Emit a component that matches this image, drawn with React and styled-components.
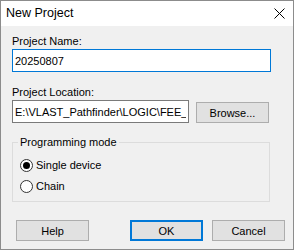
import styled, { createGlobalStyle } from 'styled-components';
import { useState } from 'react';

const GlobalStyle = createGlobalStyle`
  body {
    margin: 0;
    background: #ffffff;
    font-family: 'Liberation Sans', Arial, sans-serif;
  }
`;

function App() {
  const [mode, setMode] = useState('single');

  return (
    <>
      <GlobalStyle />
      <Dialog>
        <TitleBar>
          <Title>New Project</Title>
          <CloseIcon width="11" height="11" viewBox="0 0 11 11">
            <path d="M0.5 0.5 L10.5 10.5 M10.5 0.5 L0.5 10.5" stroke="#000" strokeWidth="1" />
          </CloseIcon>
        </TitleBar>
        <Body>
          <Content>
            <Label>Project Name:</Label>
            <TextBox $focused defaultValue="20250807" />
            <Label $gap>Project Location:</Label>
            <LocationRow>
              <TextBox $width={177} readOnly value={'E:\\VLAST_Pathfinder\\LOGIC\\FEE_LOGIC'} />
              <Button>Browse...</Button>
            </LocationRow>
            <Group>
              <Legend>Programming mode</Legend>
              <Radio onClick={() => setMode('single')}>
                <Circle>{mode === 'single' && <Dot />}</Circle>
                Single device
              </Radio>
              <Radio onClick={() => setMode('chain')}>
                <Circle>{mode === 'chain' && <Dot />}</Circle>
                Chain
              </Radio>
            </Group>
          </Content>
          <Footer>
            <Button>Help</Button>
            <ButtonGroup>
              <Button $primary>OK</Button>
              <Button>Cancel</Button>
            </ButtonGroup>
          </Footer>
        </Body>
      </Dialog>
    </>
  );
}

const Dialog = styled.div`
  box-sizing: border-box;
  width: 294px;
  height: 250px;
  border: 1px solid #8c8c8c;
  background: #f0f0f0;
  display: flex;
  flex-direction: column;
  color: #000;
`;

const TitleBar = styled.div`
  height: 25px;
  background: #ffffff;
  display: flex;
  align-items: center;
  justify-content: space-between;
  padding-left: 5px;
`;

const Title = styled.span`
  font-size: 12.5px;
  line-height: 25px;
`;

const CloseIcon = styled.svg`
  display: block;
  margin-right: 8px;
`;

const Body = styled.div`
  flex: 1;
  padding-top: 9px;
  font-size: 11px;
`;

const Content = styled.div`
  display: flex;
  flex-direction: column;
  padding: 0 22px 0 11px;
`;

const Label = styled.div`
  line-height: 13px;
  margin-top: ${(p) => (p.$gap ? '14px' : '0')};
  margin-bottom: 1px;
`;

const TextBox = styled.input`
  box-sizing: border-box;
  width: ${(p) => (p.$width ? `${p.$width}px` : '259px')};
  height: 23px;
  margin: 0;
  padding: 0 2px;
  border: 1px solid ${(p) => (p.$focused ? '#0078d7' : '#7a7a7a')};
  background: #ffffff;
  font-family: inherit;
  font-size: 11px;
  color: #000;
  outline: none;
`;

const LocationRow = styled.div`
  display: flex;
  align-items: flex-end;
  gap: 7px;
`;

const Button = styled.button`
  box-sizing: border-box;
  width: 73px;
  height: 21px;
  margin: 0;
  padding: 0;
  background: #e1e1e1;
  border: ${(p) => (p.$primary ? '2px solid #0078d7' : '1px solid #adadad')};
  font-family: inherit;
  font-size: 11px;
  color: #000;
`;

const Group = styled.fieldset`
  box-sizing: border-box;
  width: 258px;
  margin: 13px 0 0;
  padding: 6px 0 4px 7px;
  border: 1px solid #dcdcdc;
`;

const Legend = styled.legend`
  margin-left: -2px;
  padding: 0 2px;
  line-height: 13px;
`;

const Radio = styled.label`
  display: flex;
  align-items: center;
  height: 21px;
  line-height: 13px;
`;

const Circle = styled.span`
  box-sizing: border-box;
  width: 13px;
  height: 13px;
  margin-right: 3px;
  border: 1px solid #333333;
  border-radius: 50%;
  background: #ffffff;
  display: flex;
  align-items: center;
  justify-content: center;
`;

const Dot = styled.span`
  width: 7px;
  height: 7px;
  border-radius: 50%;
  background: #000000;
`;

const Footer = styled.div`
  display: flex;
  justify-content: space-between;
  padding: 18px 8px 0 15px;
`;

const ButtonGroup = styled.div`
  display: flex;
  gap: 9px;
`;

export default App;
